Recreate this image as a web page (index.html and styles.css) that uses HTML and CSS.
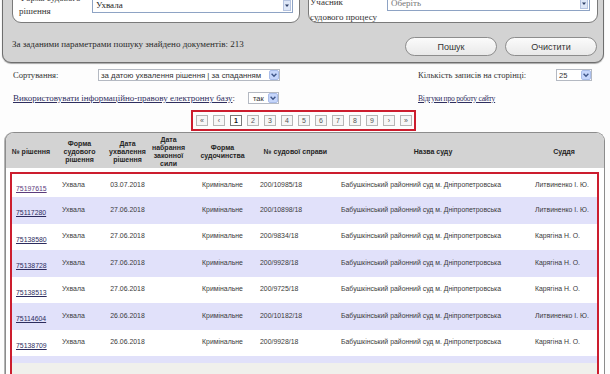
FILE: index.html
```html
<!DOCTYPE html>
<html lang="uk">
<head>
<meta charset="utf-8">
<title>Результати пошуку</title>
<link rel="stylesheet" href="styles.css">
</head>
<body>
<div class="search">
  <div class="fields">
    <div class="fieldset fs-left">
      <div class="flabel">Форма судового<br>рішення</div>
      <div class="select sel-form"><span class="val">Ухвала</span><span class="sbtn"><svg width="8" height="11" viewBox="0 0 8 11"><rect x="0.5" y="0.5" width="7" height="10" fill="#dde6f7" stroke="#b5c3e0"/><path d="M2 4.5h4L4 7z" fill="#2d3e66"/></svg></span></div>
    </div>
    <div class="fieldset fs-right">
      <div class="flabel">Учасник<br>судового процесу</div>
      <div class="select sel-part"><span class="val muted">Оберіть</span><span class="sbtn"><svg width="8" height="11" viewBox="0 0 8 11"><rect x="0.5" y="0.5" width="7" height="10" fill="#dde6f7" stroke="#b5c3e0"/><path d="M2 4.5h4L4 7z" fill="#2d3e66"/></svg></span></div>
    </div>
  </div>
  <div class="status">
    <span class="found">За заданими параметрами пошуку знайдено документів: 213</span>
    <div class="buttons"><button class="btn">Пошук</button><button class="btn">Очистити</button></div>
  </div>
</div>

<div class="opts">
  <div class="opt-row">
    <div class="opt-left">
      <span class="olabel sort-label">Сортування:</span>
      <div class="combo combo-sort"><span>за датою ухвалення рішення | за спаданням</span><svg class="carr" width="10" height="10" viewBox="0 0 10 10"><rect x="0.5" y="0.5" width="9" height="9" rx="1.5" fill="#c6d6fb" stroke="#a9bde9"/><path d="M2.6 3.8L5 6.2L7.4 3.8" fill="none" stroke="#3f5689" stroke-width="1.4"/></svg></div>
    </div>
    <div class="opt-right">
      <span class="olabel count-label">Кількість записів на сторінці:</span>
      <div class="combo combo-count"><span>25</span><svg class="carr" width="10" height="10" viewBox="0 0 10 10"><rect x="0.5" y="0.5" width="9" height="9" rx="1.5" fill="#c6d6fb" stroke="#a9bde9"/><path d="M2.6 3.8L5 6.2L7.4 3.8" fill="none" stroke="#3f5689" stroke-width="1.4"/></svg></div>
    </div>
  </div>
  <div class="opt-row row-two">
    <div class="opt-left">
      <span class="olabel base-label"><a href="#" class="olink base-link">Використовувати інформаційно-правову електронну базу</a>:</span>
      <div class="combo combo-yes"><span>так</span><svg class="carr" width="10" height="10" viewBox="0 0 10 10"><rect x="0.5" y="0.5" width="9" height="9" rx="1.5" fill="#c6d6fb" stroke="#a9bde9"/><path d="M2.6 3.8L5 6.2L7.4 3.8" fill="none" stroke="#3f5689" stroke-width="1.4"/></svg></div>
    </div>
    <div class="opt-right">
      <a href="#" class="olink feedback-link">Відгуки про роботу сайту</a>
    </div>
  </div>
</div>

<div class="pager-wrap">
  <div class="pager">
    <span class="pg">&laquo;</span><span class="pg">&lsaquo;</span><span class="pg cur">1</span><span class="pg">2</span><span class="pg">3</span><span class="pg">4</span><span class="pg">5</span><span class="pg">6</span><span class="pg">7</span><span class="pg">8</span><span class="pg">9</span><span class="pg">&rsaquo;</span><span class="pg">&raquo;</span>
  </div>
</div>

<div class="results">
  <div class="thead">
    <div class="th">№ рішення</div>
    <div class="th">Форма<br>судового<br>рішення</div>
    <div class="th">Дата<br>ухвалення<br>рішення</div>
    <div class="th">Дата<br>набрання<br>законної<br>сили</div>
    <div class="th">Форма<br>судочинства</div>
    <div class="th">№ судової справи</div>
    <div class="th">Назва суду</div>
    <div class="th">Суддя</div>
  </div>
  <div class="rows">
    <div class="row">
      <div class="td c-num"><a href="#" class="doc visited">75197615</a></div>
      <div class="td c-form">Ухвала</div>
      <div class="td c-date">03.07.2018</div>
      <div class="td c-legal"></div>
      <div class="td c-kind">Кримінальне</div>
      <div class="td c-case">200/10985/18</div>
      <div class="td c-court">Бабушкінський районний суд м. Дніпропетровська</div>
      <div class="td c-judge">Литвиненко І. Ю.</div>
    </div>
    <div class="row alt">
      <div class="td c-num"><a href="#" class="doc">75117280</a></div>
      <div class="td c-form">Ухвала</div>
      <div class="td c-date">27.06.2018</div>
      <div class="td c-legal"></div>
      <div class="td c-kind">Кримінальне</div>
      <div class="td c-case">200/10898/18</div>
      <div class="td c-court">Бабушкінський районний суд м. Дніпропетровська</div>
      <div class="td c-judge">Литвиненко І. Ю.</div>
    </div>
    <div class="row">
      <div class="td c-num"><a href="#" class="doc">75138580</a></div>
      <div class="td c-form">Ухвала</div>
      <div class="td c-date">27.06.2018</div>
      <div class="td c-legal"></div>
      <div class="td c-kind">Кримінальне</div>
      <div class="td c-case">200/9834/18</div>
      <div class="td c-court">Бабушкінський районний суд м. Дніпропетровська</div>
      <div class="td c-judge">Карягіна Н. О.</div>
    </div>
    <div class="row alt">
      <div class="td c-num"><a href="#" class="doc">75138728</a></div>
      <div class="td c-form">Ухвала</div>
      <div class="td c-date">27.06.2018</div>
      <div class="td c-legal"></div>
      <div class="td c-kind">Кримінальне</div>
      <div class="td c-case">200/9928/18</div>
      <div class="td c-court">Бабушкінський районний суд м. Дніпропетровська</div>
      <div class="td c-judge">Карягіна Н. О.</div>
    </div>
    <div class="row">
      <div class="td c-num"><a href="#" class="doc">75138513</a></div>
      <div class="td c-form">Ухвала</div>
      <div class="td c-date">27.06.2018</div>
      <div class="td c-legal"></div>
      <div class="td c-kind">Кримінальне</div>
      <div class="td c-case">200/9725/18</div>
      <div class="td c-court">Бабушкінський районний суд м. Дніпропетровська</div>
      <div class="td c-judge">Карягіна Н. О.</div>
    </div>
    <div class="row alt">
      <div class="td c-num"><a href="#" class="doc">75114604</a></div>
      <div class="td c-form">Ухвала</div>
      <div class="td c-date">26.06.2018</div>
      <div class="td c-legal"></div>
      <div class="td c-kind">Кримінальне</div>
      <div class="td c-case">200/10182/18</div>
      <div class="td c-court">Бабушкінський районний суд м. Дніпропетровська</div>
      <div class="td c-judge">Литвиненко І. Ю.</div>
    </div>
    <div class="row">
      <div class="td c-num"><a href="#" class="doc">75138709</a></div>
      <div class="td c-form">Ухвала</div>
      <div class="td c-date">26.06.2018</div>
      <div class="td c-legal"></div>
      <div class="td c-kind">Кримінальне</div>
      <div class="td c-case">200/9928/18</div>
      <div class="td c-court">Бабушкінський районний суд м. Дніпропетровська</div>
      <div class="td c-judge">Карягіна Н. О.</div>
    </div>
    <div class="row alt stub"></div>
    <div class="row tail"></div>
  </div>
</div>
</body>
</html>
```

FILE: styles.css
```css
* { box-sizing: border-box; }

html, body {
  margin: 0;
  padding: 0;
}

body {
  width: 610px;
  height: 374px;
  overflow: hidden;
  background: #fdfdfd;
  font-family: "Liberation Serif", "Times New Roman", serif;
  color: #2b2b2b;
}

/* ---------- search panel ---------- */
.search {
  margin: -24px 6px 0 2px;
  background: #d3d3d3;
  border: 1px solid #6e6e6e;
  border-radius: 0 0 9px 9px;
  padding: 0 5px 6px 9px;
  box-shadow: 0 1px 1px #a8a8a8;
}

.fields {
  display: flex;
  gap: 8px;
}

.fieldset {
  background: #fff;
  border: 1px solid #7a7a7a;
  border-radius: 9px;
  height: 46px;
  display: flex;
  align-items: flex-start;
}

.fs-left {
  width: 288px;
  padding: 14px 0 0 6px;
}

.fs-right {
  width: 290px;
  padding: 17px 0 0 1px;
}

.flabel {
  font-size: 9px;
  line-height: 13px;
  color: #333;
}

.fs-left .flabel { width: 73px; }
.fs-right .flabel { width: 77px; line-height: 15px; }

.select {
  display: flex;
  align-items: center;
  justify-content: space-between;
  height: 16px;
  background: #fff;
  border: 1px solid #8ea3c4;
  padding: 0 1px 0 3px;
  font-size: 9px;
  color: #222;
}

.sel-form { width: 201px; margin-top: 5px; }
.sel-part { width: 203px; margin-top: 0; }

.val.muted { color: #777; }

.sbtn { display: flex; }
.sbtn svg { display: block; }

.status {
  display: flex;
  justify-content: space-between;
  align-items: flex-start;
  margin-top: 14px;
}

.found {
  font-size: 9px;
  line-height: 13px;
  margin-top: 1px;
  color: #2a2a2a;
}

.buttons {
  display: flex;
  gap: 8px;
  margin-right: 1px;
}

.btn {
  width: 92px;
  height: 19px;
  border: 1px solid #8d8d8d;
  border-radius: 10px;
  background: linear-gradient(#fbfbfb, #e9e9e9);
  font-family: "Liberation Sans", Arial, sans-serif;
  font-size: 9px;
  color: #333;
  padding: 0;
}

/* ---------- options ---------- */
.opts {
  padding-left: 13px;
  margin-top: 6px;
}

.opt-row {
  display: flex;
  align-items: center;
  height: 12px;
}

.row-two { margin-top: 11px; }

.opt-left {
  width: 405px;
  display: flex;
  align-items: center;
}

.opt-right {
  display: flex;
  align-items: center;
}

.olabel {
  font-size: 9px;
  color: #333;
}

.sort-label { width: 85px; font-size: 8.6px; }
.count-label { width: 138px; font-size: 8.6px; }
.base-label { width: 235px; }

.olink {
  color: #2f2f5f;
  text-decoration: underline;
}

.base-link { font-size: 9px; }

.feedback-link {
  font-size: 7.6px;
  letter-spacing: -0.25px;
}

.combo {
  display: flex;
  align-items: center;
  justify-content: space-between;
  height: 12px;
  background: #fff;
  border: 1px solid #b4b9c2;
  padding: 0 0 0 2px;
  font-family: "Liberation Sans", Arial, sans-serif;
  font-size: 7.5px;
  color: #333;
}

.carr { display: block; }

.combo-sort { width: 182px; font-size: 7.8px; }
.combo-yes { width: 31px; padding-left: 4px; }
.combo-count { width: 36px; }

/* ---------- pager ---------- */
.pager-wrap {
  display: flex;
  padding-left: 191px;
  margin-top: 6px;
}

.pager {
  display: flex;
  gap: 5px;
  align-items: center;
  height: 21px;
  width: 225px;
  border: 2px solid #cc1d2e;
  padding: 0 0 0 3px;
}

.pg {
  width: 12px;
  height: 11px;
  border: 1px solid #b6b6b6;
  background: #f6f6f6;
  font-family: "Liberation Sans", Arial, sans-serif;
  font-size: 7px;
  line-height: 9px;
  text-align: center;
  color: #555;
}

.pg.cur {
  font-weight: bold;
  color: #111;
  border-color: #7a7a7a;
  background: #fff;
}

/* ---------- results ---------- */
.results {
  margin: 1px 5px 0 5px;
  border: 1px solid #8c8c8c;
  border-bottom: 0;
  border-radius: 9px 9px 0 0;
  background: #fff;
  padding: 0 5px 0 4px;
  box-shadow: -1px 0 0 #b4b4b4;
  font-family: "Liberation Sans", Arial, sans-serif;
}

.thead {
  margin: 0 -5px 0 -4px;
  padding: 3px 0 0 5px;
  height: 35px;
  background: #d3d3d3;
  border-radius: 8px 8px 0 0;
  display: grid;
  grid-template-columns: 40px 57px 39px 43px 65px 81px 194px 68px;
  align-items: center;
}

.th {
  text-align: center;
  font-weight: bold;
  font-size: 7px;
  line-height: 8px;
  color: #252525;
}

.rows {
  margin-top: 4px;
  border: 2px solid #cc1d2e;
  border-bottom: 0;
}

.row {
  display: grid;
  grid-template-columns: 39px 57px 39px 43px 65px 81px 194px 67px;
  align-items: center;
  height: 26.5px;
  background: #fff;
}

.row:first-child { height: 23px; }

.row.alt { background: #e1e1fa; }

.row.stub { height: 7px; }

.row.tail {
  height: 20px;
  background: #f0f0ec;
}

.td {
  font-size: 6.9px;
  color: #3a3a3a;
  white-space: nowrap;
  padding-bottom: 2px;
}

.c-num { padding: 5px 0 0 4px; }
.c-form { padding-left: 11px; }
.c-date, .c-kind { text-align: center; }
.c-case, .c-court, .c-judge { padding-left: 5px; }

.doc {
  color: #2c2c5e;
  text-decoration: underline;
}

.doc.visited { color: #5b3b7c; }
```
